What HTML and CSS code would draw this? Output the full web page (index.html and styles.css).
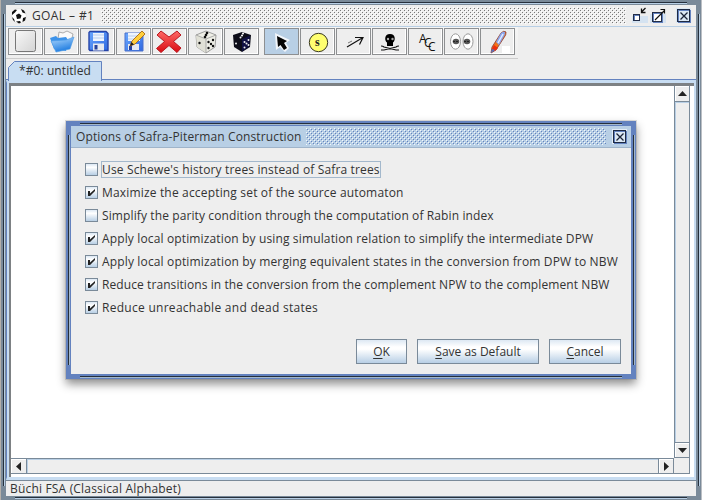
FILE: index.html
```html
<!DOCTYPE html>
<html lang="en">
<head>
<meta charset="utf-8">
<title>GOAL - #1</title>
<link rel="stylesheet" href="styles.css">
</head>
<body>
<svg width="0" height="0" class="defs">
  <defs>
    <linearGradient id="paper" x1="0" y1="0" x2="1" y2="1"><stop offset="0" stop-color="#f8f8f8"/><stop offset="1" stop-color="#d4d4d4"/></linearGradient>
    <linearGradient id="folder" x1="0" y1="0" x2="0.4" y2="1"><stop offset="0" stop-color="#b4dcff"/><stop offset="1" stop-color="#1f7ce0"/></linearGradient>
    <linearGradient id="disk" x1="0" y1="0" x2="1" y2="1"><stop offset="0" stop-color="#6aa8ff"/><stop offset="1" stop-color="#2f68e0"/></linearGradient>
    <linearGradient id="red" x1="0" y1="0" x2="0" y2="1"><stop offset="0" stop-color="#ff6a66"/><stop offset="1" stop-color="#d80c14"/></linearGradient>
    <g id="close">
      <rect x="1.5" y="1.5" width="12" height="12" fill="#dce8f4" stroke="#6382bf"/>
      <rect x="0.5" y="0.5" width="12" height="12" fill="none" stroke="#1e2a44"/>
      <path d="M3.5 3.5l7 7M10.5 3.5l-7 7" stroke="#1c2438" stroke-width="1.3"/>
    </g>
    <path id="tick" d="M3 5h2v2.500l5-4.500v2L5 10H3z" fill="#222"/>
  </defs>
</svg>
<div class="window frame">
  <div class="titlebar">
    <svg class="ball" width="16" height="16" viewBox="0 0 16 16"><circle cx="8" cy="8" r="7.3" fill="#fff" stroke="#ddd" stroke-width=".7"/><path d="M5 7l3-1.500 2.500 2-1 3-3.500.500zM1 4l3-2.500L6 2 4 4.500 1 7zM10 1l3 1.500 1.500 3-3-1zM1 9l2 2 1 3-2-2zM12 10l3-1-1 3.500-2.500 1.500zM5 13.500l4-.5 1 1.500-2 1z" fill="#111"/></svg>
    <span class="caption t-main">GOAL – #1</span>
    <span class="bumps"></span>
    <svg class="winbtns" width="60" height="17" viewBox="0 0 60 17">
      <rect x="0" y="9" width="16" height="7" fill="#d5e3f1"/><rect x="18" y="7" width="16" height="9" fill="#d5e3f1"/><rect x="44" y="1" width="15" height="15" fill="#dbe7f3"/>
      <rect x="2.500" y="8.500" width="5" height="5" fill="#fff" stroke="#6382bf"/><rect x="1.500" y="7.500" width="6" height="6" fill="none" stroke="#222d48"/>
      <path d="M13.500 1l-4 4M9.500 1.500v4h4" fill="none" stroke="#111" stroke-width="1.300"/>
      <rect x="21.500" y="6.500" width="9" height="9" fill="#fff" stroke="#6382bf"/><rect x="20.500" y="5.500" width="9" height="9" fill="none" stroke="#222d48"/>
      <path d="M23 13l9.500-9.500M28.500 2.500h4v4" fill="none" stroke="#111" stroke-width="1.200"/>
      <use href="#close" x="45" y="2"/>
    </svg>
  </div>
  <div class="toolbar">
    <span class="tool"><svg width="33" height="25" viewBox="0 0 33 25"><rect x="6.500" y="1.500" width="20" height="21" rx="2" fill="url(#paper)" stroke="#777"/></svg></span>
    <span class="tool"><svg width="33" height="25" viewBox="0 0 33 25"><path d="M14 3l4 1 4-2 6 3-3 12H12z" fill="#fafafa" stroke="#999" stroke-width=".8"/><path d="M5 9l6-2 2 2 8-1 2 3-2 11-12-2z" fill="#3d93ea"/><path d="M6 12l15-1 8-3-4 12-14 3z" fill="url(#folder)" stroke="#4c9be6" stroke-width=".6"/></svg></span>
    <span class="tool"><svg width="33" height="25" viewBox="0 0 33 25"><path d="M9 2.500h16l2 2v17H9l-1-1v-17z" fill="url(#disk)" stroke="#2644a8" stroke-width="1.400"/><rect x="12" y="4" width="11" height="8" fill="#eef4fd"/><path d="M12 6h11M12 9h11" stroke="#b8cdec"/><rect x="12" y="14.500" width="11" height="7" fill="#e6e9f0"/><rect x="13.500" y="16" width="3" height="4.500" fill="#26429c"/></svg></span>
    <span class="tool"><svg width="33" height="25" viewBox="0 0 33 25"><path d="M8 4h18v18H8z" fill="url(#disk)" stroke="#4a70cb"/><rect x="11" y="4" width="12" height="8" fill="#eef4fd"/><path d="M11 7h12M11 10h12" stroke="#b8cdec"/><rect x="11" y="15" width="11" height="6" fill="#e6e9f0"/><rect x="12" y="17" width="3" height="4" fill="#26429c"/><path d="M13 17l2-5L25 2l3 3-10 10z" fill="#ffcf3c" stroke="#a86a14" stroke-width=".9"/><path d="M13 17l1.500-4 2.500 2.500z" fill="#222"/></svg></span>
    <span class="tool"><svg width="33" height="25" viewBox="0 0 33 25"><path d="M8 2l8 6 8-6 4 4-7.500 6.500L28 19l-4 4.500-8-7-8 7-4.500-4 8-7L4 6z" fill="url(#red)" stroke="#b91820"/></svg></span>
    <span class="tool"><svg width="33" height="25" viewBox="0 0 33 25"><path d="M17 2l10 4-1 12-9 6-9-6-1-12z" fill="#eeeee6" stroke="#888" stroke-width=".8"/><path d="M7 6l10 4v14l-9-6z" fill="#e0e0d6"/><path d="M7 6l10 4 10-4M17 10v14" fill="none" stroke="#999" stroke-width=".8"/><g fill="#111"><circle cx="18" cy="4" r="1.300"/><circle cx="17" cy="6" r="1.300"/><circle cx="16" cy="8" r="1.300"/><circle cx="10.500" cy="14" r="1.200"/><circle cx="19.500" cy="13" r="1.200"/><circle cx="24" cy="11" r="1.200"/><circle cx="22" cy="15" r="1.200"/><circle cx="19.500" cy="19" r="1.200"/><circle cx="24" cy="17" r="1.200"/></g></svg></span>
    <span class="tool"><svg width="33" height="25" viewBox="0 0 33 25"><path d="M17 3l9 3-1 12-8 5-8-5-1-12z" fill="#0c0c18"/><path d="M17 10l8-3.500-1 11-7 5z" fill="#111142"/><g fill="#eee"><circle cx="18" cy="4.500" r="1.100"/><circle cx="17" cy="6.500" r="1.100"/><circle cx="15.500" cy="8.500" r="1"/><circle cx="11" cy="14.500" r="1"/><circle cx="19.500" cy="13" r="1"/><circle cx="23.500" cy="11" r="1"/><circle cx="21.500" cy="14.500" r="1"/><circle cx="19.500" cy="18.500" r="1"/><circle cx="23.500" cy="16" r="1"/></g></svg></span>
    <span class="gap"></span>
    <span class="tool on"><svg width="33" height="25" viewBox="0 0 33 25"><path d="M10 4l15 7-4 3 3 5-4 4-5-5-4 3z" fill="#f2f6fb"/><path d="M12 7l10 5-3 2 3 5-3 2-3.500-5-2.500 2z" fill="#050505"/></svg></span>
    <span class="tool"><svg width="33" height="25" viewBox="0 0 33 25"><circle cx="17.500" cy="13.500" r="9.200" fill="#ffff70" stroke="#3a3a20"/></svg><b class="state">s</b></span>
    <span class="tool"><svg width="33" height="25" viewBox="0 0 33 25"><path d="M10 18L26 8.500M18 8.500h8l-3.500 7" fill="none" stroke="#111" stroke-width="1.200"/><path d="M11 14l4-2" stroke="#777"/></svg></span>
    <span class="tool"><svg width="33" height="25" viewBox="0 0 33 25"><path d="M17 5c6 0 5.500 7 3 8.500V17h-6v-3.500C11.500 12 11 5 17 5z" fill="#000"/><circle cx="15" cy="10" r="1.200" fill="#aaa"/><circle cx="19.500" cy="10" r="1.200" fill="#aaa"/><path d="M8 17q2 0 3 1l12 3h3M26 17q-2 0-3 1l-12 3H8" fill="none" stroke="#111" stroke-width="1.100"/></svg></span>
    <span class="tool acc"><i>A</i><i>C</i><i>C</i></span>
    <span class="tool"><svg width="33" height="25" viewBox="0 0 33 25"><g fill="#fff" stroke="#999"><ellipse cx="10.500" cy="12.500" rx="5" ry="7.700"/><ellipse cx="23" cy="12.500" rx="5" ry="7.700"/></g><g fill="#555"><ellipse cx="11" cy="12.500" rx="3.300" ry="2.700"/><ellipse cx="22" cy="12.500" rx="3.300" ry="2.700"/></g><path d="M8 12.500h6M19 12.500h6" stroke="#222" stroke-dasharray="2 1"/></svg></span>
    <span class="tool"><svg width="33" height="25" viewBox="0 0 33 25"><rect x="21" y="17" width="8" height="8" fill="#fff"/><path d="M10 24l1-6 9-14q3-3 5-1 0 3-1 4l-9 14z" fill="#f37218" stroke="#823c38" stroke-width=".8"/><path d="M15 13l5-9q3-2 4-1 0 3-1 4l-5 9z" fill="#88a7f2"/><path d="M13 16l4 3-3 3-3-2z" fill="#ed2e10"/><path d="M17 14l5-9" stroke="#e3ecff" stroke-width="1.500"/><path d="M10 24l1-4 3 1z" fill="#546ec2"/></svg></span>
  </div>
  <div class="tabrow">
    <svg class="tabshape" width="94" height="20" viewBox="0 0 94 20"><path d="M.5 20V6.500L6.500.5h87V20" fill="#c8ddf2" stroke="#6382bf"/></svg>
    <span class="tablabel t-tab">*#0: untitled</span>
  </div>
  <div class="pane">
    <div class="canvas"></div>
    <div class="vscroll">
      <span class="arrow"><svg width="9" height="5" viewBox="0 0 9 5"><path d="M0 5L4.500 0 9 5z"/></svg></span>
      <span class="track"></span>
      <span class="arrow down"><svg width="9" height="5" viewBox="0 0 9 5"><path d="M0 0l4.500 5L9 0z"/></svg></span>
    </div>
    <div class="hscroll">
      <span class="arrow"><svg width="5" height="9" viewBox="0 0 5 9"><path d="M5 0L0 4.500 5 9z"/></svg></span>
      <span class="track"></span>
      <span class="arrow right"><svg width="5" height="9" viewBox="0 0 5 9"><path d="M0 0l5 4.500L0 9z"/></svg></span>
    </div>
    <div class="corner"></div>
  </div>
  <div class="status"><span class="t-status">Büchi FSA (Classical Alphabet)</span></div>
</div>

<div class="dialog frame">
  <div class="titlebar">
    <span class="caption t-dialog">Options of Safra-Piterman Construction</span>
    <span class="bumps"></span>
    <svg class="dclose" width="15" height="15" viewBox="0 0 15 15"><rect width="15" height="15" fill="#e3edf7"/><use href="#close" x="1" y="1"/></svg>
  </div>
  <div class="options">
    <div class="option"><span class="box"></span><span class="focus"><span class="o1">Use Schewe's history trees instead of Safra trees</span></span></div>
    <div class="option"><span class="box"><svg width="13" height="13"><use href="#tick"/></svg></span><span class="o2">Maximize the accepting set of the source automaton</span></div>
    <div class="option"><span class="box"></span><span class="o3">Simplify the parity condition through the computation of Rabin index</span></div>
    <div class="option"><span class="box"><svg width="13" height="13"><use href="#tick"/></svg></span><span class="o4">Apply local optimization by using simulation relation to simplify the intermediate DPW</span></div>
    <div class="option"><span class="box"><svg width="13" height="13"><use href="#tick"/></svg></span><span class="o5">Apply local optimization by merging equivalent states in the conversion from DPW to NBW</span></div>
    <div class="option"><span class="box"><svg width="13" height="13"><use href="#tick"/></svg></span><span class="o6">Reduce transitions in the conversion from the complement NPW to the complement NBW</span></div>
    <div class="option"><span class="box"><svg width="13" height="13"><use href="#tick"/></svg></span><span class="o7">Reduce unreachable and dead states</span></div>
  </div>
  <div class="buttons">
    <span class="btn ok"><span><u>O</u>K</span></span>
    <span class="btn save"><span><u>S</u>ave as Default</span></span>
    <span class="btn cancel"><span><u>C</u>ancel</span></span>
  </div>
</div>
</body>
</html>
```
FILE: styles.css
```css
* { box-sizing: border-box; }
html, body { margin: 0; height: 100%; }
body {
  position: relative;
  width: 702px;
  height: 500px;
  overflow: hidden;
  padding-left: 1px;
  background: linear-gradient(90deg, #b5b0aa 0 1px, #a0a8b0 1px 701px, #bbbfc4 701px);
  font: 12px/16px "Open Sans", "Noto Sans", sans-serif;
  color: #333;
}
svg { display: block; flex: none; }
span { white-space: nowrap; }
.defs { position: absolute; }

/* Metal frame: coloured border with engraved lines */
.frame { position: relative; border: 5px solid var(--edge); display: flex; flex-direction: column; background: #eee; }
.frame::before, .frame::after { content: ""; position: absolute; pointer-events: none; }
.frame::before { top: -3px; bottom: -3px; left: 9px; right: 9px; border: solid #26303c; border-width: 1px 0; box-shadow: 0 1px 0 var(--shine), inset 0 1px 0 var(--shine); }
.frame::after { left: -3px; right: -3px; top: 9px; bottom: 9px; border: solid #26303c; border-width: 0 1px; box-shadow: 1px 0 0 var(--shine), inset 1px 0 0 var(--shine); }
.window { --edge: #7a8a99; --shine: #b8cfe5; width: 700px; height: 500px; }
.dialog {
  --edge: #6382bf; --shine: #a3b8cc;
  position: absolute; left: 66px; top: 121px; width: 570px; height: 258px;
  box-shadow: 0 0 0 1px rgba(120,120,120,.25), 0 5px 9px rgba(0,0,0,.45);
}

.titlebar { display: flex; height: 22px; flex: none; border-bottom: 1px solid #b8cfe5; align-items: center; padding-left: 5px; }
.ball { margin-right: 5px; }
.caption { flex: none; }
.window .caption { width: 69px; }
.bumps {
  --dot: #777; --lite: #fff;
  height: 17px; flex: none;
  background:
    conic-gradient(from 0deg at 1px 1px, transparent 75%, var(--dot) 0) 1px 1px / 4px 4px,
    conic-gradient(from 0deg at 1px 1px, transparent 75%, var(--dot) 0) 3px 3px / 4px 4px,
    conic-gradient(from 0deg at 1px 1px, transparent 75%, var(--lite) 0) 0 0 / 4px 4px,
    conic-gradient(from 0deg at 1px 1px, transparent 75%, var(--lite) 0) 2px 2px / 4px 4px;
}
.window .bumps { width: 525px; }
.winbtns { margin-left: 6px; }
.dialog .titlebar { background: #b8cfe5; border-color: #9fb4ca; }
.dialog .caption { width: 230px; }
.dialog .bumps { --dot: #6382bf; --lite: #f2f7fc; width: 300px; }
.dclose { margin-left: 6px; }

.toolbar { display: flex; gap: 1px; width: 512px; height: 32px; padding: 1px 0 0 2px; border-bottom: 1px solid #ccc; background: linear-gradient(#f5f5f5, #eee); flex: none; }
.tool { width: 35px; height: 27px; border: 1px solid #8d8f91; background: #eee; position: relative; box-shadow: inset -1px -1px #fff; flex: none; }
.tool.on { background: #b8cfe5; box-shadow: none; }
.gap { width: 3px; flex: none; }
.state { position: absolute; left: 14px; top: 5px; font: bold 12px/16px "Liberation Serif", serif; color: #222; }
.acc { display: flex; padding: 4px 0 0 10px; }
.acc i { font: 12px/12px "Open Sans", sans-serif; color: #111; width: 5px; }
.acc i:nth-child(2) { margin-top: 4px; width: 4px; }
.acc i:nth-child(3) { margin-top: 8px; }

.tabrow { height: 21px; padding: 2px 0 0 2px; border-bottom: 1px solid #6382bf; position: relative; flex: none; }
.tabshape { margin: 0 0 -1px; }
.tablabel { position: absolute; left: 13px; top: 4px; }

.pane {
  flex: none; height: 400px; display: grid;
  grid-template: 372px 16px / 663px 16px;
  border: solid #c8ddf2; border-width: 3px 2px 3px 1px;
  border-left-color: #6382bf;
  background: #fff;
  padding: 3px 3px 4px 4px;
  box-shadow: inset 2px 0 #c8ddf2, inset 4px 3px #7d8184;
}
.canvas { background: #fff; }
.vscroll, .hscroll { display: flex; background: #eee; }
.vscroll { flex-direction: column; border: solid #7a8a99; border-width: 0 1px 0 1px; }
.hscroll { border: solid #7a8a99; border-width: 1px 0 1px; }
.arrow { width: 16px; height: 16px; flex: none; display: flex; align-items: center; justify-content: center; background: #eee; border: solid #7a8a99; border-width: 0 1px 0 0; box-shadow: inset 1px 1px #fff; }
.arrow svg { fill: #222; }
.hscroll .arrow { height: 14px; }
.vscroll .arrow { width: 14px; border-width: 0 0 1px; }
.arrow.right { border-width: 0 1px; }
.vscroll .arrow.down { border-width: 1px 0; }
.track { flex: 1; box-shadow: inset 1px 1px #b8cfe5; }
.corner { background: #eee; border: solid #7a8a99; border-width: 0 1px 1px 0; }
.status { height: 16px; flex: none; border-top: 1px solid #7a8a99; padding-left: 4px; line-height: 15px; background: #eee; }

.options { padding: 10px 0 0 14px; }
.option { display: flex; align-items: center; height: 23px; }
.box { width: 13px; height: 13px; border: 1px solid #7a8a99; background: linear-gradient(#dce8f4, #fff 30%, #b8cfe5); margin-right: 4px; flex: none; }
.box svg { margin: -1px; }
.focus { height: 17px; width: 280px; border: 1px solid #a3b8cc; margin-left: -1px; line-height: 15px; }
.buttons { display: flex; gap: 10px; justify-content: flex-end; padding: 20px 10px 0 0; }
.btn { height: 25px; border: 1px solid #7a8a99; background: linear-gradient(#dde8f3, #fff 30%, #fff 40%, #b8cfe5); display: flex; align-items: center; justify-content: center; }
.ok { width: 51px; } .save { width: 122px; } .cancel { width: 72px; }
u { text-underline-offset: 2px; }

/* Tracking per label */
.t-main { letter-spacing: .4px; }
.t-tab { letter-spacing: .08px; }
.t-dialog { letter-spacing: .12px; }
.t-status { letter-spacing: .18px; }
.o1 { letter-spacing: .15px; }
.o2 { letter-spacing: .17px; }
.o3 { letter-spacing: .11px; }
.o4 { letter-spacing: .14px; }
.o5 { letter-spacing: .15px; }
.o6 { letter-spacing: .085px; }
.o7 { letter-spacing: .28px; }
```
